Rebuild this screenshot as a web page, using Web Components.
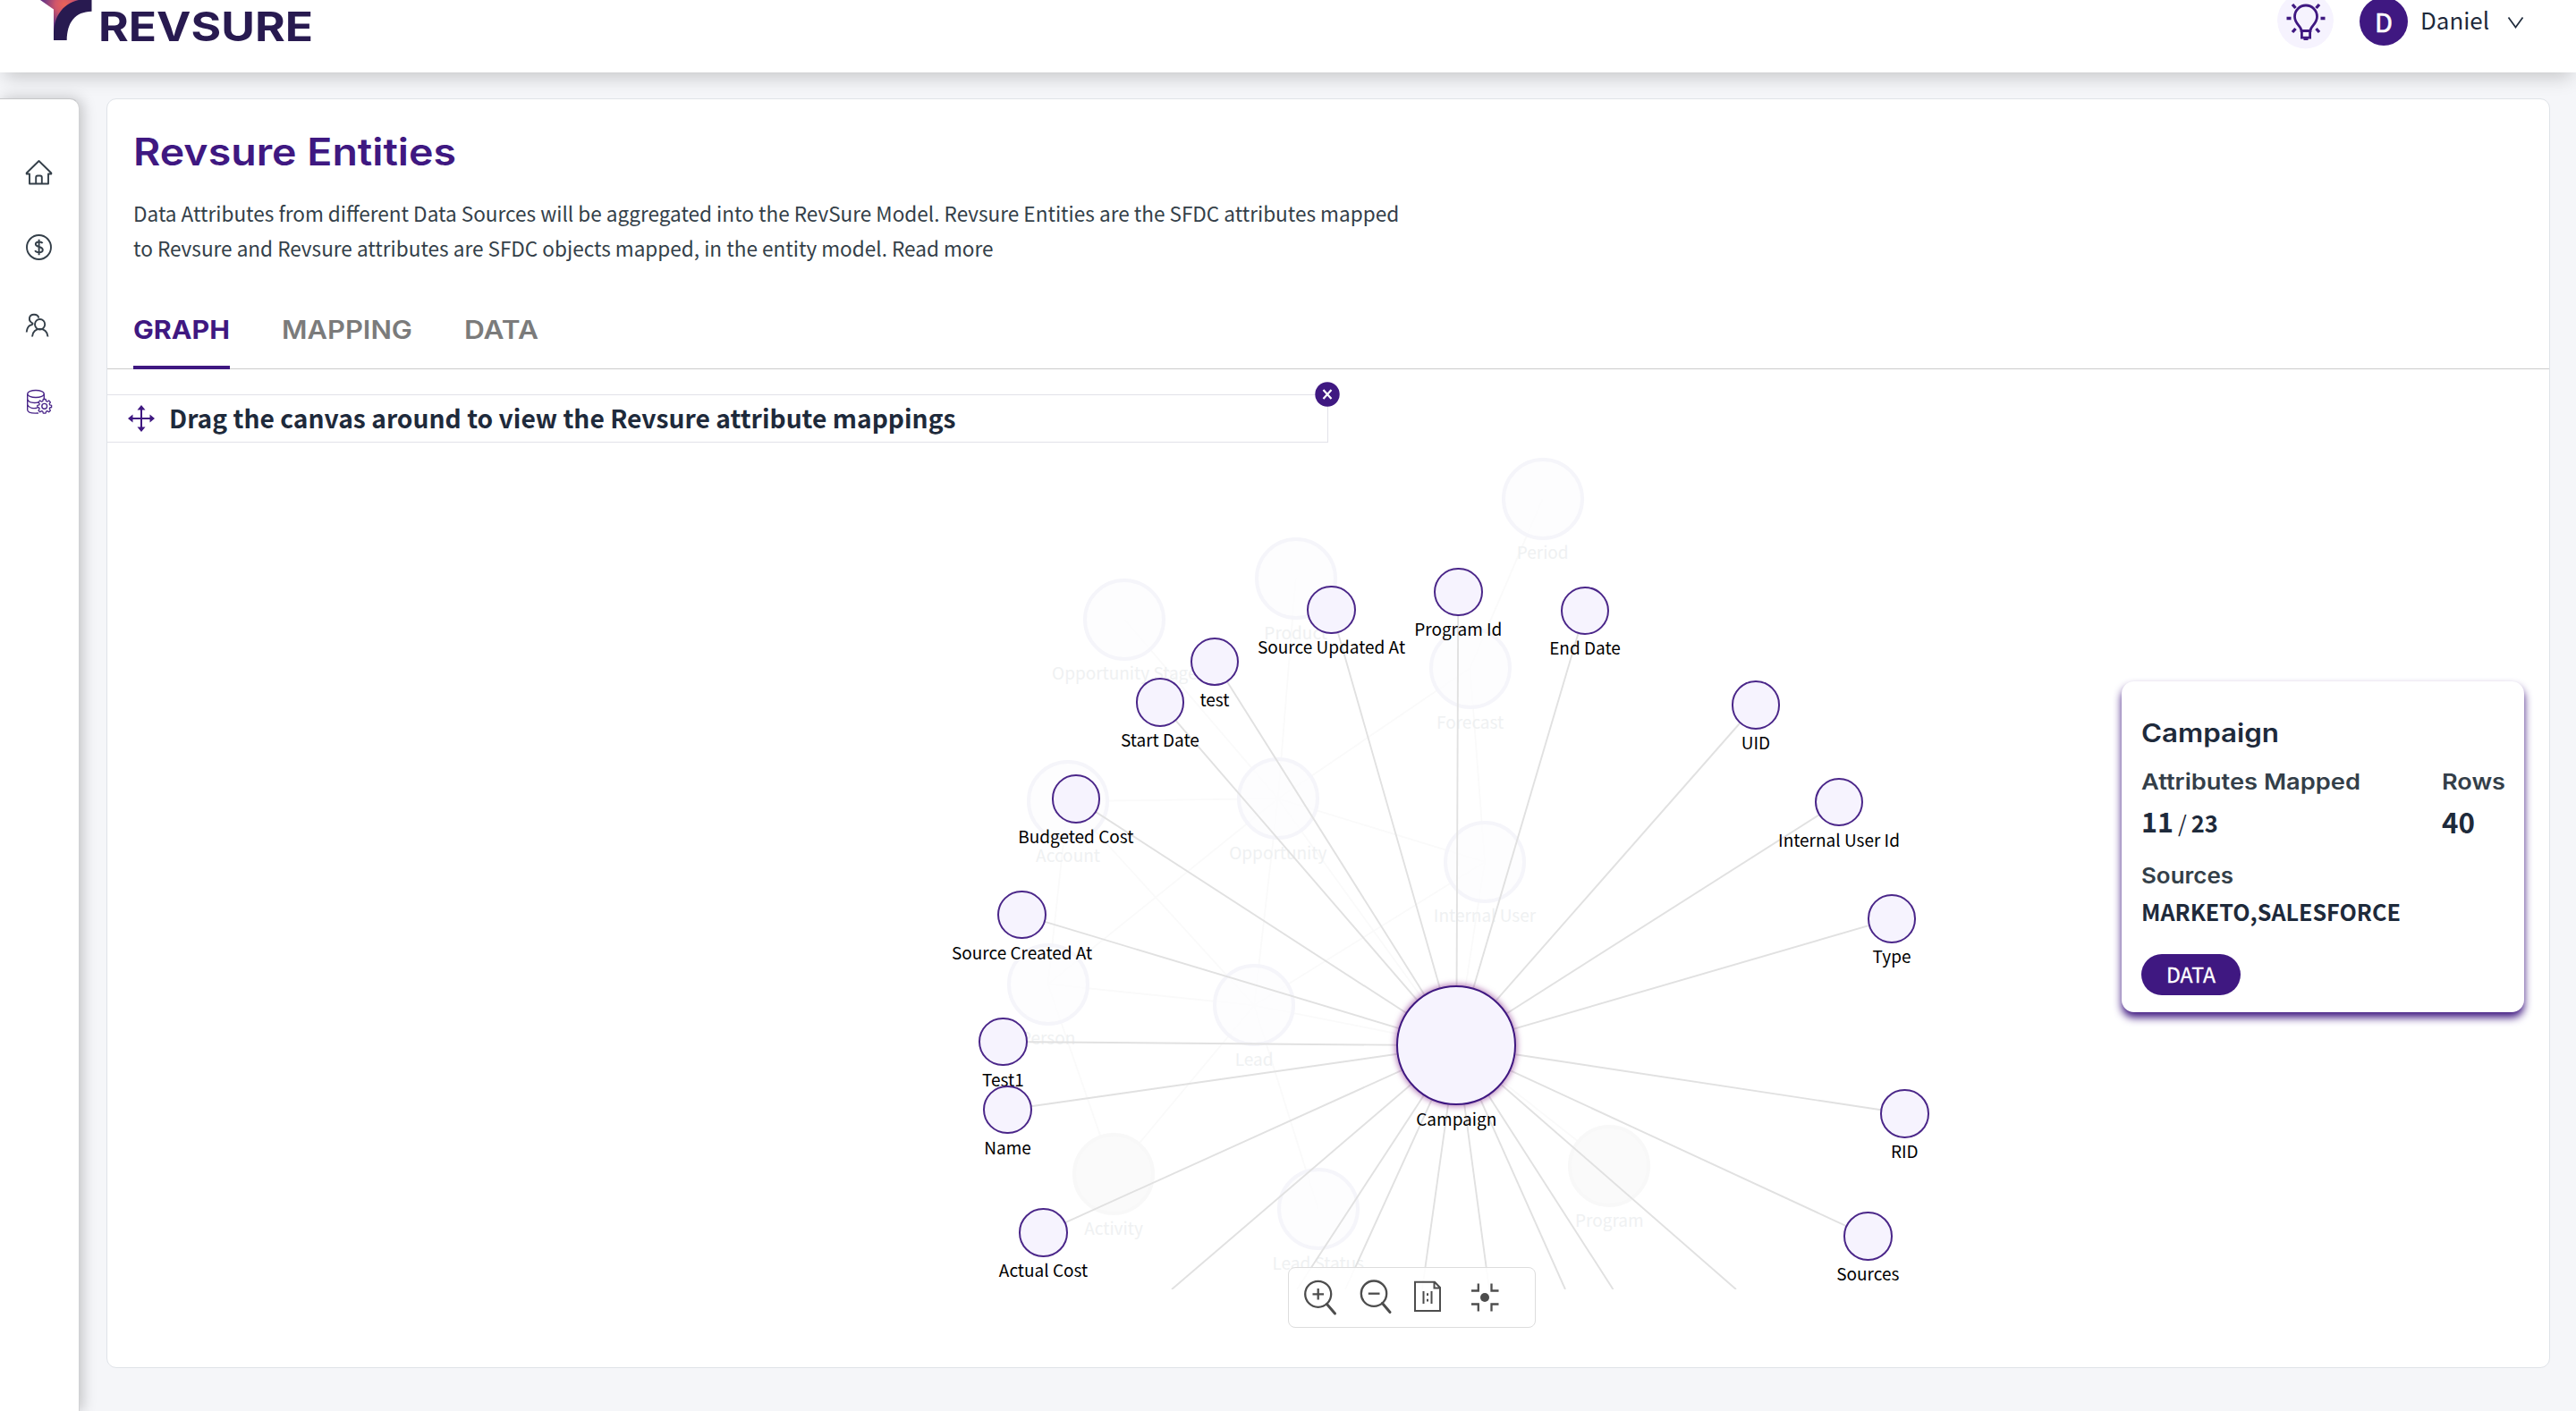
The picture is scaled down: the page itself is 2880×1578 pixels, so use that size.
<!DOCTYPE html>
<html lang="en">
<head>
<meta charset="utf-8">
<title>Revsure Entities</title>
<style>
html,body{margin:0;padding:0}
body{width:2880px;height:1578px;overflow:hidden;background:#f5f6f9;
  --sans:"Noto Sans CJK SC","Open Sans",sans-serif;--head:Inter,"Open Sans",sans-serif;
  --purple:#3f1881;--ink:#1e2a3b;font-family:var(--sans);color:var(--ink)}
</style>
</head>
<body>
<app-shell></app-shell>
<script>
const define=(name,html,setup)=>customElements.define(name,class extends HTMLElement{
  constructor(){super();this.attachShadow({mode:"open"}).innerHTML=html;}
  connectedCallback(){if(setup&&!this.ready){this.ready=true;setup.call(this,this.shadowRoot);}}
});

define("app-shell",`
<style>
:host{display:flex;flex-direction:column;width:2880px;height:1578px}
.body{flex:1;display:flex;min-height:0}
side-nav{margin-top:29px}
main-panel{margin:29px 29px 48px 30px;flex:1}
top-bar{z-index:3}
</style>
<top-bar></top-bar>
<div class="body"><side-nav></side-nav><main-panel></main-panel></div>`);

define("top-bar",`
<style>
:host{display:flex;align-items:flex-start;justify-content:space-between;height:81px;background:#fff;position:relative;box-shadow:0 10px 20px -5px rgba(0,0,0,.2)}
.brand{display:flex;padding-left:40px}
.brand type-line{font:700 45px/60px var(--head);color:#281a50;margin-left:6px}
.user{display:flex;padding-right:57px;height:81px}
.bulb{width:63px;height:55px;border-radius:0 0 32px 32px;margin-right:29px}
.av{width:54px;height:51px;display:flex;justify-content:center;overflow:hidden}
.av svg{display:block}
.name{font-size:26px;line-height:44px;margin-left:14px;margin-right:20px}
</style>
<div class="brand">
<svg width="64" height="60" viewBox="40 0 64 60"><defs><radialGradient id="g" gradientUnits="userSpaceOnUse" cx="72" cy="5" r="34"><stop offset="0" stop-color="#ea6357"/><stop offset=".3" stop-color="#d0566a"/><stop offset=".7" stop-color="#6d3783"/><stop offset="1" stop-color="#54307f"/></radialGradient></defs>
<path d="M45 0L60 10.500V40L80 12 92 0Z" fill="url(#g)"/><path d="M60 45V40C60 20 68 5 88 0H102.500V12.700C84 13 75 25 74.700 45Z" fill="#281a50"/></svg>
<type-line w="240" mode="stretch">REVSURE</type-line></div>
<div class="user">
<svg class="bulb" viewBox="2546 0 63 55"><circle cx="2577.500" cy="23" r="31.500" fill="#f6f3fe"/>
<g fill="none" stroke="#3f1881" stroke-width="2.800"><path d="M2573 34.500C2573 29 2565.500 27 2565.500 18.500A12.500 12.500 0 0 1 2590.500 18.500C2590.500 27 2583 29 2583 34.500Z"/><path d="M2573.400 34V42.200H2582.600V34M2575.500 43.600H2580.500"/><path d="M2556.500 20.500H2561.500M2594.500 20.500H2599.500M2563 5L2566.500 9M2593 5L2589.500 9M2563 36L2566.500 32M2593 36L2589.500 32" stroke-width="3.400"/></g></svg>
<div class="av"><user-badge>D</user-badge></div>
<type-line class="name" w="77">Daniel</type-line>
<svg width="20" height="44" viewBox="2802 0 20 44"><path d="M2803.500 19.500L2811.500 30.500 2819.500 19.500" fill="none" stroke="#1e2a3b" stroke-width="1.700"/></svg>
</div>`);

define("user-badge",`
<style>:host{display:flex;justify-content:center;width:54px;height:54px;margin-top:-3px;border-radius:50%;background:var(--purple);color:#fff;font:400 29px/52px var(--sans);-webkit-text-stroke:.6px #fff;flex:none}</style><slot></slot>`);

define("side-nav",`
<style>
:host{display:flex;flex-direction:column;align-items:flex-start;box-sizing:border-box;width:89px;background:#fff;border-top:1px solid #c6c7c9;border-right:1px solid #d2d3d5;border-radius:0 11px 0 0;box-shadow:3px 0 16px rgba(0,0,0,.22);padding:63px 0 0 24px}
svg{width:40px;height:40px;display:block;fill:none;stroke:#343f49;stroke-width:1.900;flex:none}
svg:nth-of-type(2){margin-top:45px}
svg:nth-of-type(3){margin-top:46.500px}
svg:nth-of-type(4){margin-top:43.500px}
</style>
<svg viewBox="24 174 40 40"><path d="M43.500 180L57.300 193.500V194.500H54V205.500H33V194.500H29.700V193.500Z" stroke-linejoin="round"/><path d="M40.200 205.500V198.500Q40.200 196.500 42 196.500H45Q46.800 196.500 46.800 198.500V205.500"/></svg>
<svg viewBox="24 259 40 40"><g transform="translate(0 -1)"><circle cx="43.500" cy="277.500" r="13.500"/><path d="M47.500 273.200C46.500 271 40 270.500 39.800 274 39.700 277.800 47.800 276.200 47.800 280.500 47.600 284.500 40.500 284 39.200 281.200M43.600 268.800V286.200"/></g></svg>
<svg viewBox="24 345.500 40 40"><ellipse cx="44.600" cy="362.300" rx="5.600" ry="5.800"/><path d="M36 376C36.500 364.500 53 364.500 53.500 376M29.700 371Q30.300 365 34 363.200 37 362.300 36.500 361C31 358.500 32 351.300 38 351.300 41.500 351.300 43 353.200 43.300 355.200"/></svg>
<svg viewBox="24 429 40 40" style="stroke:#4a2689;stroke-width:1.400"><ellipse cx="40" cy="440.500" rx="9.300" ry="4"/><path d="M30.700 440.500V458.500C31 461.300 36 462.500 43 462M49.300 440.500V446M30.700 446.500C32 450.500 38 451 43 450M30.700 452.500C32 456 37 457 41.500 456.300"/><circle cx="49.700" cy="454.300" r="2.900"/><path stroke-linejoin="round" stroke-width="1.300" d="M48.300 446.500H51.100L51.600 448.700 52.800 449.200 54.700 448 56.400 449.900 55.200 451.700 55.700 452.900 57.600 453.300V455.500L55.700 456 55.200 457.200 56.400 459 54.700 460.800 52.800 459.600 51.600 460.100 51.100 462.100H48.300L47.800 460.100 46.600 459.600 44.700 460.800 43 459 44.200 457.200 43.700 456 41.800 455.500V453.300L43.700 452.900 44.200 451.700 43 449.900 44.700 448 46.600 449.200 47.800 448.700Z"/></svg>`);

define("main-panel",`
<style>
:host{display:flex;flex-direction:column;background:#fff;border:1px solid #dfe3e8;border-radius:11px;box-sizing:border-box}
.title{font:600 42px/60px var(--head);color:var(--purple);margin:29px 0 0 29px}
.desc{margin:19px 0 0 29px;font-size:22.500px;line-height:39px;color:#343f49}
</style>
<type-line class="title" w="361" mode="stretch">Revsure Entities</type-line>
<div class="desc"><type-line w="1416">Data Attributes from different Data Sources will be aggregated into the RevSure Model. Revsure Entities are the SFDC attributes mapped</type-line><type-line w="962">to Revsure and Revsure attributes are SFDC objects mapped, in the entity model. Read more</type-line></div>
<tab-bar></tab-bar>
<entity-graph></entity-graph>`);

define("tab-bar",`
<style>
:host{display:flex;box-sizing:border-box;height:89px;margin-top:27px;border-bottom:1px solid #ccc;padding-left:29px;gap:58px}
type-line{font:600 28px/90px var(--head);color:#7b7b7b;box-sizing:border-box;height:89px}
.on{color:var(--purple);border-bottom:4px solid var(--purple);font-weight:700}
</style>
<type-line class="on" w="108" mode="stretch">GRAPH</type-line><type-line w="146" mode="stretch">MAPPING</type-line><type-line w="83" mode="stretch">DATA</type-line>`);

const OX=120,OY=413;
const leaves=[["Source Updated At",1488.5,681.8],["Program Id",1630.3,661.8],["End Date",1772,682.9],["test",1357.9,740],["Start Date",1296.9,785.4],["Budgeted Cost",1202.8,893.6],["Source Created At",1142.6,1023.2],["Test1",1121.4,1165],["Name",1126.5,1241],["Actual Cost",1166.5,1378.3],["Type",2115,1027.7],["RID",2129.3,1245.3],["Sources",2088.3,1382.3],["UID",1963,788.5],["Internal User Id",2056,897]];
const hub=["Campaign",1628.3,1169.3];
const offscreen=[1310,1450,1504,1590,1665,1750,1803.5,1941];
const ghosts={Period:[1724.7,557.9],Product:[1448.7,647],"Opportunity Stage":[1257.3,692.9],Forecast:[1643.6,747],Opportunity:[1428.8,893.2],Account:[1194,896],"Internal User":[1660,963.9],Person:[1171.6,1100.7],Lead:[1402.2,1124.3],Activity:[1245,1313],"Lead Status":[1473.7,1352],Program:[1799.3,1304],Campaign:[1628.3,1169.3]};
const ghostEdges=["Period>Forecast","Product>Opportunity","Opportunity Stage>Opportunity","Forecast>Opportunity","Forecast>Internal User","Opportunity>Account","Opportunity>Internal User","Opportunity>Lead","Opportunity>Person","Opportunity>Campaign","Account>Person","Account>Lead","Person>Lead","Person>Activity","Lead>Activity","Lead>Lead Status","Lead>Internal User","Lead>Campaign","Internal User>Campaign","Campaign>Program"];

define("entity-graph",`
<style>
:host{display:block;position:relative;height:1116px}
.canvas{position:absolute;left:0;top:0;width:2729px;height:1029px;overflow:hidden}
svg{position:absolute;left:0;top:0}
detail-card{position:absolute;left:2252px;top:349px}
graph-tools{position:absolute;left:1320px;top:1004px}
drag-hint{position:absolute;left:0;top:28px}
</style>
<div class="canvas"></div>
<drag-hint>Drag the canvas around to view the Revsure attribute mappings</drag-hint>
<detail-card></detail-card><graph-tools></graph-tools>`,function(root){
  const line=(a,b,c,d)=>`<path d="M${a} ${b}L${c} ${d}"/>`;
  const node=(kind,t,x,y)=>`<entity-node kind="${kind}" style="left:${x-OX}px;top:${y-OY}px">${t}</entity-node>`;
  const layer=(s,w,c)=>`<svg width="2729" height="1029" viewBox="${OX} ${OY} 2729 1029" stroke="${s}" stroke-width="${w}">${c}</svg>`;
  let h=layer("#fafafa",1.8,ghostEdges.map(e=>{const[a,b]=e.split(">");return line(...ghosts[a],...ghosts[b]);}).join(""));
  for(const [t,[x,y]] of Object.entries(ghosts))if(t!=="Campaign")h+=node(t==="Activity"||t==="Program"?"ghost solid":"ghost",t,x,y);
  h+=layer("#e1e1e1",1.9,leaves.map(l=>line(hub[1],hub[2],l[1],l[2])).join("")+offscreen.map(x=>line(hub[1],hub[2],x,1442)).join(""));
  h+=leaves.map(l=>node("leaf",...l)).join("")+node("hub",...hub);
  root.querySelector(".canvas").innerHTML=h;
});

define("entity-node",`
<style>
:host{position:absolute;display:flex;flex-direction:column;align-items:center;width:0;--d:54.500px}
i{display:block;box-sizing:border-box;flex:none;width:var(--d);height:var(--d);margin-top:calc(var(--d) / -2);border-radius:50%;border:2px solid #4a2689;background:#f6f3fe}
span{white-space:nowrap;font-size:19px;line-height:28px;color:#000;margin-top:.3px}
:host([kind~=hub]){--d:134px}
:host([kind~=hub]) i{border:2.500px solid #3f1881;box-shadow:0 0 6px 1.500px rgba(125,30,130,.55)}
:host([kind~=ghost]){--d:92px}
:host([kind~=ghost]) i{border:4px solid #f5f5fa;background:rgba(252,252,253,.7)}
:host([kind~=ghost]) span{color:#eff1f2;margin-top:-.5px}
:host([kind~=solid]) i{border-color:#f8f8f8;background:#fafafa}
</style><i></i><span><slot></slot></span>`);

define("drag-hint",`
<style>
:host{display:flex;box-sizing:border-box;width:1365px;height:54px;border:1px solid #e2e2e9;border-left:0;padding-left:22px;align-items:center}
type-line{font-size:29px;line-height:50px;height:52px;font-weight:600;margin-left:15px}
.x{position:absolute;right:-14px;top:-15px}
</style>
<svg width="32" height="32" viewBox="-16 -16 32 32"><path d="M-13 0H13M0-13V13" stroke="#3f1881" stroke-width="2"/><path d="M-15 0L-9.500-4.500V4.500ZM15 0L9.500-4.500V4.500ZM0-15L-4.500-9.500H4.500ZM0 15L-4.500 9.500H4.500Z" fill="#3f1881"/></svg>
<type-line w="880"><slot></slot></type-line>
<svg class="x" width="28" height="28" viewBox="-14 -14 28 28"><circle r="13.700" fill="#3f1881"/><path d="M-4.500-5L4.500 5M4.500-5L-4.500 5" stroke="#fff" stroke-width="2.200"/></svg>`);

define("detail-card",`
<style>
:host{display:flex;flex-direction:column;box-sizing:border-box;width:450px;height:370px;border-radius:14px;background:#fff;box-shadow:0 6px 10px #3f1881;padding:38px 21px 0 22px}
.h{font:600 28px/40px var(--head)}
.l{font:600 24.500px/34px var(--head);color:#343f49}
.row{display:flex;justify-content:space-between;margin-top:17px}
.v{display:flex;align-items:baseline;line-height:55px;height:61px;margin-bottom:10px}
.n{font-size:31px;font-weight:600}.s{font-size:25px;margin:0 5px 0 5px}.m{font-size:25px;font-weight:600}
.src{font-size:25.500px;line-height:46px;font-weight:600}
.btn{display:flex;justify-content:center;width:111px;height:46px;border-radius:23px;background:var(--purple);color:#fff;font-size:24px;line-height:45px;margin-top:25px;-webkit-text-stroke:.3px #fff}
</style>
<type-line class="h" w="154" mode="stretch">Campaign</type-line>
<div class="row"><div><type-line class="l" w="245" mode="stretch">Attributes Mapped</type-line><div class="v"><type-line class="n" w="36">11</type-line><span class="s">/</span><type-line class="m" w="30">23</type-line></div></div>
<div><type-line class="l" w="71" mode="stretch">Rows</type-line><div class="v"><type-line class="n" w="37">40</type-line></div></div></div>
<type-line class="l" w="103" mode="stretch">Sources</type-line>
<type-line class="src" w="290">MARKETO,SALESFORCE</type-line>
<div class="btn"><type-line w="55">DATA</type-line></div>`);

define("graph-tools",`
<style>
:host{display:block;box-sizing:border-box;width:277px;height:68px;border:1px solid #ddd;border-radius:8px;background:rgba(255,255,255,.9)}
svg{display:block;fill:none;stroke:#4d4d4d;stroke-width:2.300}
</style>
<svg width="275" height="66" viewBox="1441 1418 275 66"><circle cx="1473.700" cy="1447.300" r="14.500"/><path d="M1467.500 1447.300H1480M1473.700 1441V1453.600"/><path d="M1483.500 1458.500L1492.500 1469" stroke-width="3" stroke-linecap="round"/>
<circle cx="1536" cy="1446.700" r="14.200"/><path d="M1529.800 1446.700H1542.500"/><path d="M1545.500 1457.500L1554 1467.500" stroke-width="3" stroke-linecap="round"/>
<path d="M1582 1433.700H1604L1610 1440V1466H1582ZM1603.500 1434V1440.500H1610" stroke-width="2"/><path d="M1591.500 1444V1458M1600.500 1444V1458M1596 1446.300V1449M1596 1452.800V1455.500" stroke-width="2"/>
<circle cx="1660" cy="1451" r="5" fill="#4d4d4d" stroke="none"/><path d="M1645 1443.500H1652.800V1435.500M1675.500 1443.500H1667.500V1435.500M1645 1458.500H1652.800V1466.500M1675.500 1458.500H1667.500V1466.500"/></svg>`);

/* Single line of text set to a known measure, by size or by widening the letters. */
define("type-line",`<style>:host{display:block}span{display:inline-block;white-space:nowrap;transform-origin:0 50%}</style><span><slot></slot></span>`,function(root){
  const s=root.querySelector("span"),w=+this.getAttribute("w"),n=s.getBoundingClientRect().width;
  if(!w||!n)return;
  if(this.getAttribute("mode")==="stretch"){this.style.width=w+"px";s.style.transform=`scaleX(${w/n})`;}
  else this.style.fontSize=parseFloat(getComputedStyle(this).fontSize)*w/n+"px";
});
</script>
</body>
</html>
